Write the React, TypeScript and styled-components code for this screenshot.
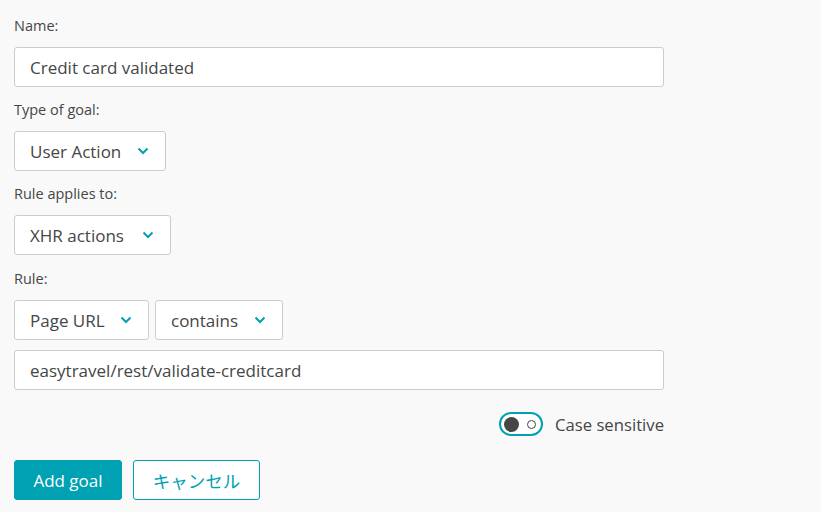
import React from "react";
import styled, { createGlobalStyle } from "styled-components";

const Global = createGlobalStyle`
  html, body { margin: 0; padding: 0; background: #f9f9f9; }
  body { font-family: "Open Sans", "Noto Sans CJK JP", sans-serif; color: #454646; }
  * { box-sizing: border-box; }
`;

const Form = styled.div`
  width: 821px;
  height: 512px;
  padding: 17px 14px 0 14px;
  display: flex;
  flex-direction: column;
`;

const Label = styled.div<{ $mt?: number }>`
  font-size: 14.5px;
  line-height: 18px;
  color: #454646;
  margin-top: ${(p) => p.$mt ?? 0}px;
  margin-bottom: 12px;
`;

const Field = styled.div`
  display: flex;
  flex-direction: column;
  margin-bottom: 14px;
`;

const TextInput = styled.div`
  width: 650px;
  height: 40px;
  border: 1px solid #cccccc;
  border-radius: 3px;
  background: #fff;
  font-size: 17px;
  padding: 0 15px;
  display: flex;
  align-items: center;
`;

const Row = styled.div`
  display: flex;
  gap: 6px;
  margin-bottom: 10px;
`;

const Select = styled.div<{ $w: number }>`
  width: ${(p) => p.$w}px;
  height: 40px;
  border: 1px solid #cccccc;
  border-radius: 3px;
  background: #fff;
  font-size: 17px;
  padding: 0 16px 0 15px;
  display: flex;
  align-items: center;
  justify-content: space-between;
`;

const Chevron = () => (
  <svg width="12" height="8" viewBox="0 0 12 8">
    <path d="M1.5 1.5 L6 6 L10.5 1.5" fill="none" stroke="#00a1b2" strokeWidth="2" />
  </svg>
);

const ToggleRow = styled.div`
  width: 650px;
  display: flex;
  justify-content: flex-end;
  align-items: center;
  gap: 12px;
  margin-top: 22px;
  font-size: 16.7px;
`;

const Toggle = styled.div`
  width: 44px;
  height: 24px;
  border: 2px solid #00a1b2;
  border-radius: 12px;
  background: #fff;
  display: flex;
  align-items: center;
  justify-content: space-between;
  padding: 0 5px 0 3px;
`;

const Knob = styled.div`
  width: 15px;
  height: 15px;
  border-radius: 50%;
  background: #454646;
`;

const Ring = styled.div`
  width: 9px;
  height: 9px;
  border-radius: 50%;
  border: 1.5px solid #454646;
`;

const Buttons = styled.div`
  display: flex;
  gap: 11px;
  margin-top: 24px;
`;

const Button = styled.button<{ $primary?: boolean; $w: number }>`
  width: ${(p) => p.$w}px;
  height: 40px;
  border-radius: 3px;
  font-family: inherit;
  font-size: 17px;
  padding: 0;
  border: 1px solid #00a1b2;
  background: ${(p) => (p.$primary ? "#00a1b2" : "#fff")};
  color: ${(p) => (p.$primary ? "#fff" : "#00a1b2")};
  display: flex;
  align-items: center;
  justify-content: center;
`;

const Jp = styled.span`
  font-size: 17.5px;
`;

export default function App() {
  return (
    <>
      <Global />
      <Form>
        <Field>
          <Label>Name:</Label>
          <TextInput>Credit card validated</TextInput>
        </Field>
        <Field>
          <Label>Type of goal:</Label>
          <Select $w={152}>
            User Action <Chevron />
          </Select>
        </Field>
        <Field>
          <Label>Rule applies to:</Label>
          <Select $w={157}>
            XHR actions <Chevron />
          </Select>
        </Field>
        <Label $mt={1}>Rule:</Label>
        <Row>
          <Select $w={135}>
            Page URL <Chevron />
          </Select>
          <Select $w={128}>
            contains <Chevron />
          </Select>
        </Row>
        <TextInput>easytravel/rest/validate-creditcard</TextInput>
        <ToggleRow>
          <Toggle>
            <Knob />
            <Ring />
          </Toggle>
          Case sensitive
        </ToggleRow>
        <Buttons>
          <Button $primary $w={108}>Add goal</Button>
          <Button $w={127}>
            <Jp>キャンセル</Jp>
          </Button>
        </Buttons>
      </Form>
    </>
  );
}
